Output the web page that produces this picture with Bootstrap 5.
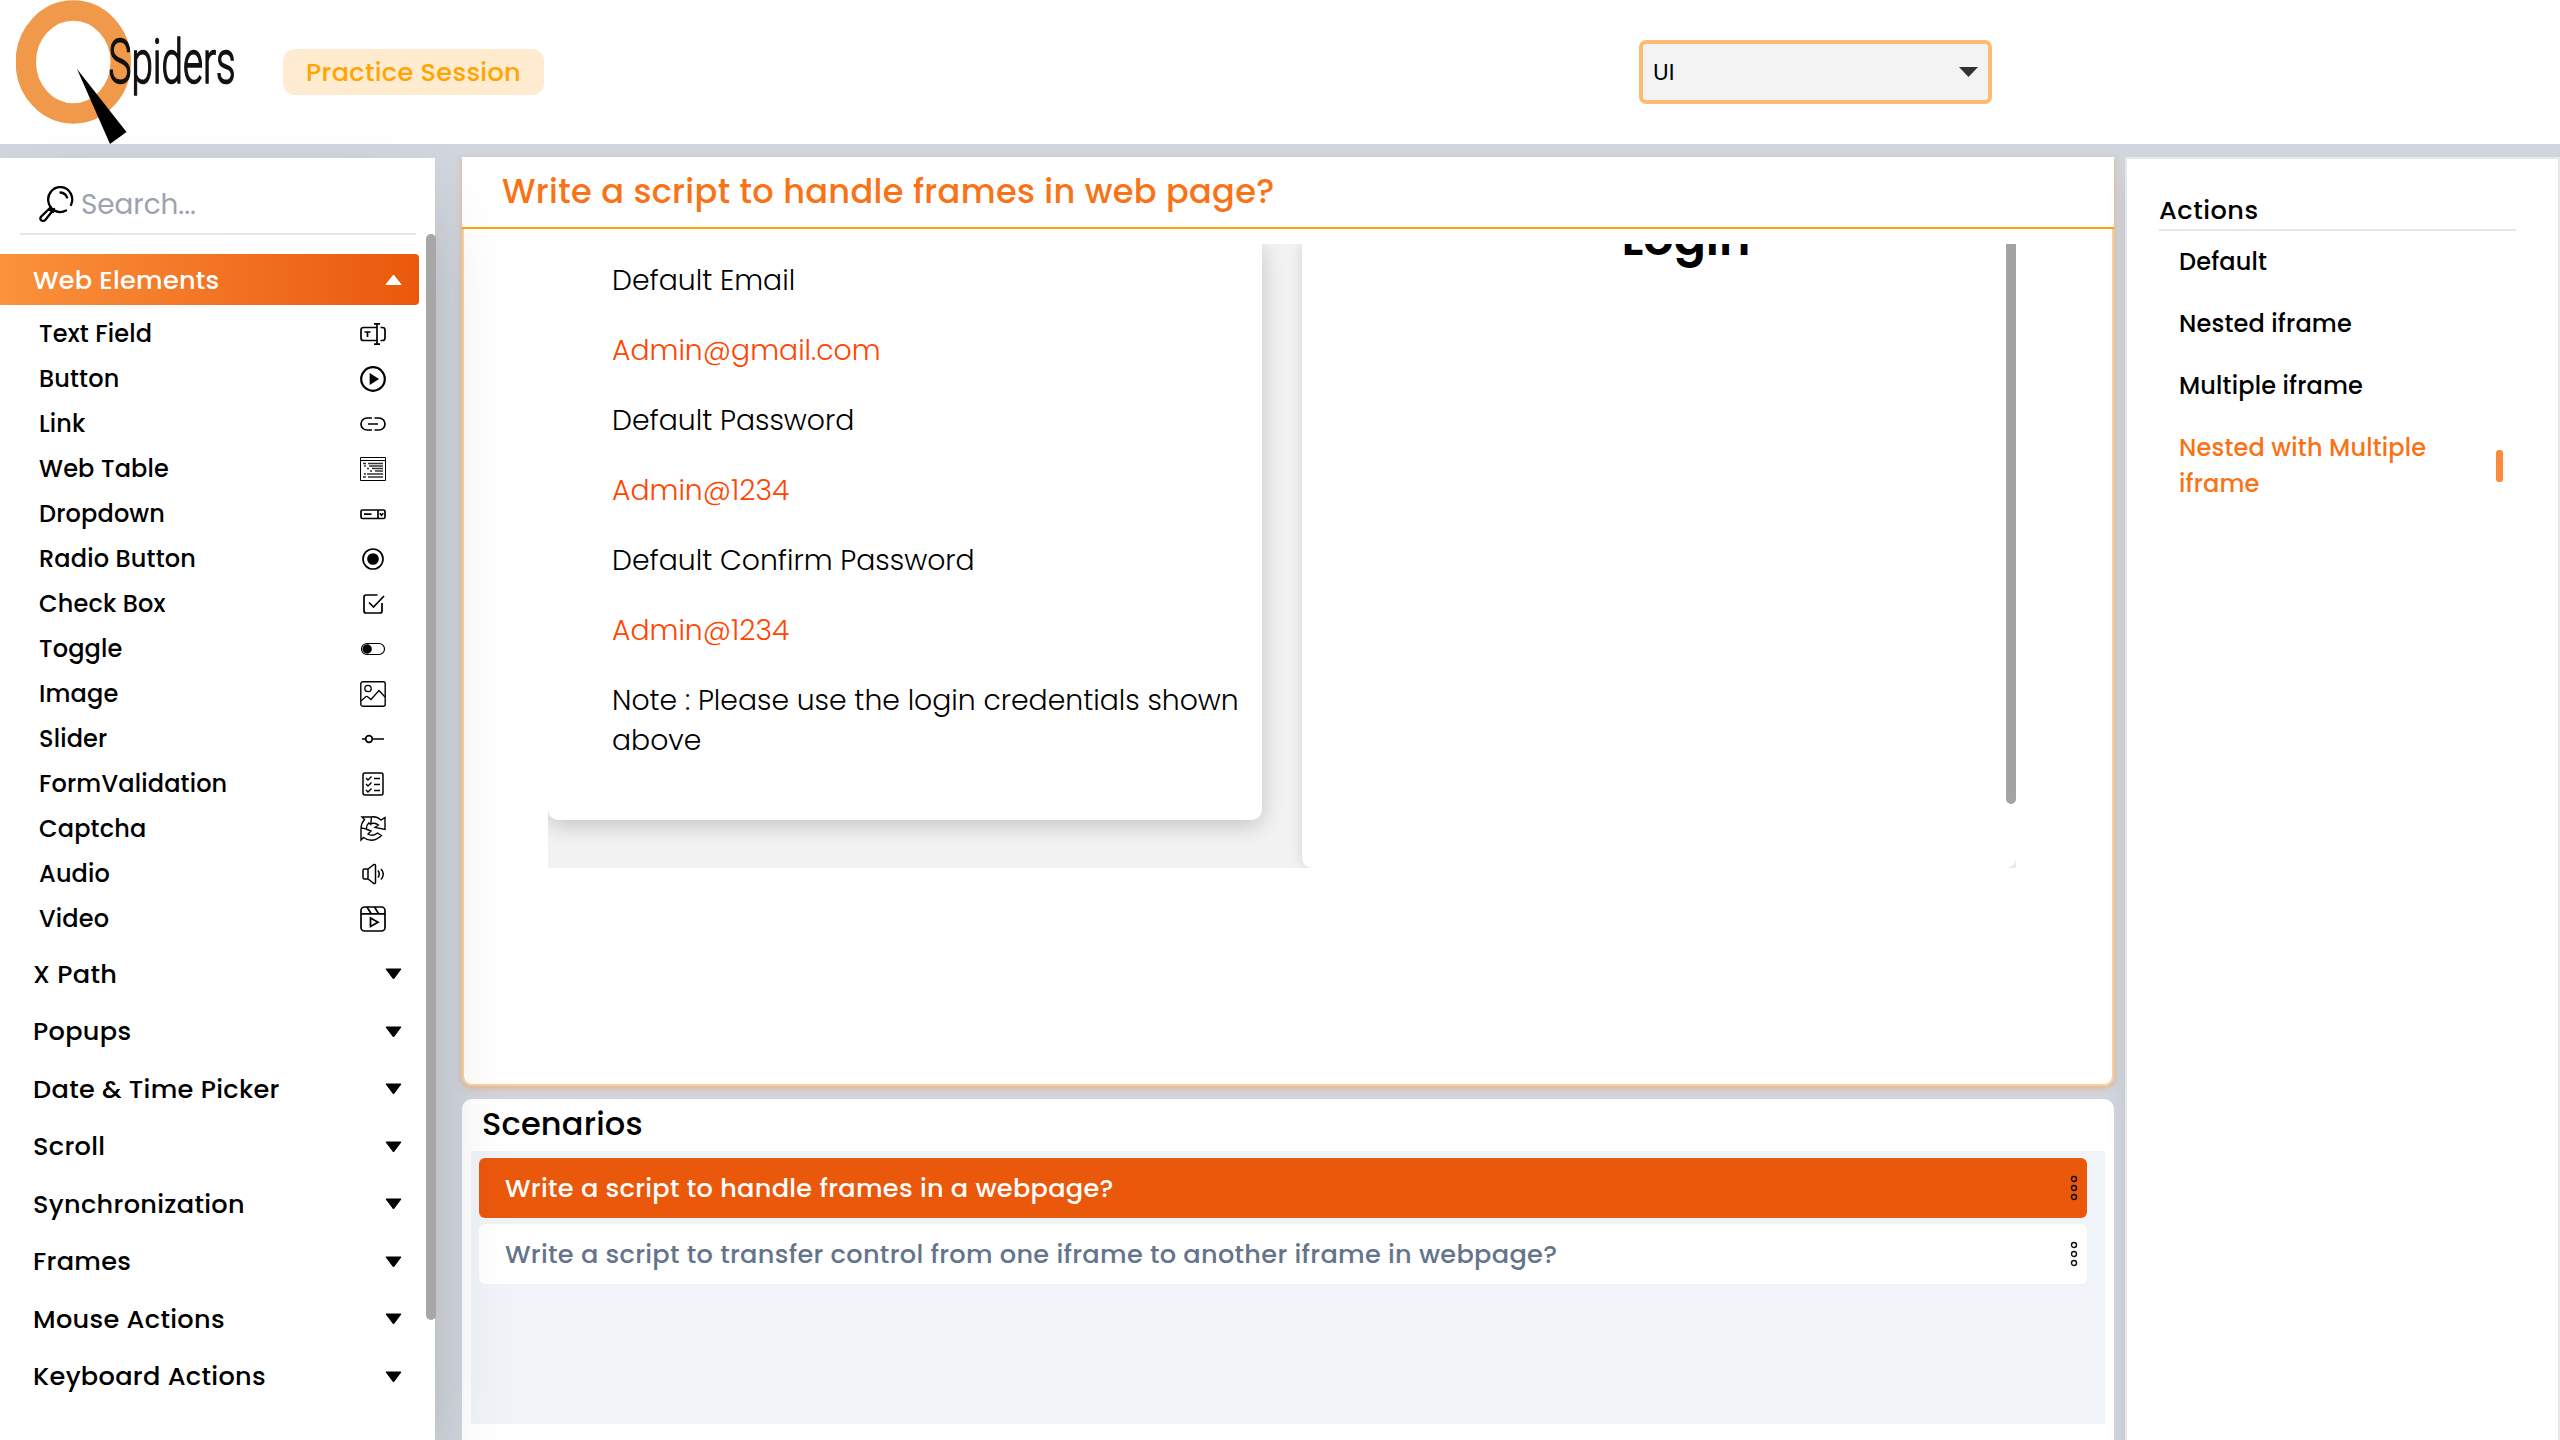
<!DOCTYPE html>
<html lang="en">
<head>
<meta charset="utf-8">
<title>QSpiders Practice Session</title>
<link rel="stylesheet" href="https://cdn.jsdelivr.net/npm/bootstrap@5.3.0/dist/css/bootstrap.min.css">
<style>
body{font-family:Poppins,Inter,"Open Sans",sans-serif;color:#000;background:#d1d5dd;height:1440px;overflow:hidden;font-weight:500}
.topbar{height:144px;padding-left:16px}
.session-tag{margin-left:45px;width:261px;height:46px;padding-top:1px;border-radius:12px;background:#ffebd0;color:#ffa500;font-size:25.6px;letter-spacing:.3px}
.type-select{margin-left:1095px;width:353px;height:64px;border:4px solid #fdba74;border-radius:7px;background:#f3f3f3;padding:0 10px 0 10px;font-size:23.2px;font-weight:400}
.workspace{height:1296px}
.side-panel{width:435px;margin-top:14px;box-shadow:0 40px 80px -19px rgba(0,0,0,.25);z-index:2}
.search-box{margin-left:20px;width:396px;height:77px;padding:17px 0 0 19px;border-bottom:2px solid #e5e7eb;color:#9ca3af;font-size:27.8px;font-weight:400;gap:7px}
.search-box span{padding-top:1px}
.group-open{margin-top:19px;width:419px;height:51px;padding:1px 17px 0 33px;border-radius:0 4px 4px 0;background:linear-gradient(90deg,#fb923c,#ea580c);color:#fff;font-size:25.6px;letter-spacing:.25px}
.topic-list{margin:6px 0 4px}
.topic-list li{height:45px;padding:0 49px 0 39px;font-size:24px;letter-spacing:.16px}
.topic-list svg{width:26px;height:26px;fill:none;stroke:#000;stroke-width:1.7}
.group-row{height:57.5px;width:419px;padding:.6px 17px 0 33px;font-size:25.6px;letter-spacing:.32px}
.side-thumb{right:-1px;top:76px;width:10px;height:1086px;border-radius:5px;background:#a7a7a7}
.main-col{width:1652px;margin:13px 0 0 27px}
.question-card{height:929px;border-radius:0 0 10px 10px;box-shadow:0 2px 6px rgba(251,146,60,.55)}
.question-title{height:72px;padding-left:40px;border-bottom:2px solid #ffa500;color:#f97316;font-size:33.6px;letter-spacing:.33px}
.question-body{height:857px;border:2px solid #fdd09b;border-top:0;border-radius:0 0 10px 10px;padding:15px 0 0 84px}
.frame-view{width:1468px;height:624px;background:#f2f2f2}
.cred-card{width:714px;height:576px;padding:16px 20px 0 64px;border-radius:0 0 10px 10px;box-shadow:0 5px 22px rgba(0,0,0,.2);font-size:28.27px;font-weight:300;line-height:40px}
.cred-card p{margin-bottom:30px}
.cred-value{color:#ff4500}
.login-card{margin-left:40px;width:714px;border-radius:0 0 10px 10px;box-shadow:0 0 14px rgba(0,0,0,.12)}
.login-title{margin:-28px 0 0 0;padding-left:64px;font-size:47.5px;line-height:45px;font-weight:600}
.frame-thumb{width:10px;height:560px;border-radius:0 0 5px 5px;background:#a3a3a3}
.scenario-card{margin-top:13px;height:341px;border-radius:10px 10px 0 0;padding:0 9px}
.scenario-head{height:52px;padding:0 0 3px 11px;font-size:32px;letter-spacing:.2px}
.scenario-list{height:273px;background:#f0f4f9;padding:7px 18px 0 8px;gap:6px}
.scenario-row{height:60px;border-radius:6px;padding:0 9px 0 26px;font-size:25.6px;color:#64748b;letter-spacing:.3px}
.scenario-row.current{background:#ea580c;color:#fff}
.action-panel{width:435px;margin:13px 0 0 11px;border:2px solid #e5e7eb;border-bottom:0;padding:32px 42px 0 32px;box-shadow:0 16px 24px -5px rgba(0,0,0,.12)}
.action-head{height:40px;border-bottom:2px solid #e5e7eb;font-size:25.6px;line-height:38px;letter-spacing:.5px}
.action-row{padding:13px 13px 13px 20px;font-size:24px;line-height:36px;letter-spacing:.17px}
.action-row.current{color:#f97316}
.action-mark{width:7px;height:32px;border-radius:3px;background:#fb8b3a}
</style>
<script src="https://cdn.jsdelivr.net/npm/bootstrap@5.3.0/dist/js/bootstrap.bundle.min.js"></script>
</head>
<body>
<header class="topbar bg-white d-flex align-items-center">
  <svg width="222" height="144" viewBox="16 0 222 144">
    <ellipse cx="73.3" cy="62" rx="47.5" ry="51.4" fill="none" stroke="#f0994b" stroke-width="20.5"/>
    <text x="108.500" y="83" font-family="Roboto" font-size="61" font-weight="300" textLength="127" lengthAdjust="spacingAndGlyphs" fill="#111" stroke="#111" stroke-width="1.600">Spiders</text>
    <path d="M77 69 126.500 132 110 144z"/>
  </svg>
  <div class="session-tag d-flex align-items-center justify-content-center">Practice Session</div>
  <div class="type-select d-flex align-items-center justify-content-between"><span>UI</span>
    <svg width="19" height="10"><path d="M0 0h19L9.500 10z" fill="#2e3436"/></svg></div>
</header>
<div class="workspace d-flex">
  <aside class="side-panel bg-white position-relative flex-shrink-0">
    <div class="search-box d-flex align-items-center">
      <svg width="35" height="36" viewBox="0 0 35 36" fill="none" stroke="#000" stroke-width="2.300" stroke-linecap="round"><path d="M27 24.500A12 12.500 0 1 1 32 19M21.500 6.500q5 .5 6.500 5M12 21 1.800 31q-1.500 3 2 4 1.500 0 2.500-1L15 23M11 24l3 2"/></svg>
      <span>Search...</span>
    </div>
    <div class="group-open d-flex align-items-center justify-content-between"><span>Web Elements</span><svg width="17" height="12"><path d="M1 10.500 8.500 1 16 10.500z" fill="#fff" stroke="#fff" stroke-linejoin="round"/></svg></div>
    <ul class="topic-list list-unstyled">
      <li class="d-flex align-items-center justify-content-between"><span>Text Field</span><svg viewBox="0 0 26 26"><path d="M17 6.500H3.500Q1 6.500 1 9v8q0 2.500 2.500 2.500H17M20.500 6.500h2Q25 6.500 25 9v8q0 2.500-2.500 2.500h-2M17 3v20M14 2.800h6M14 23.200h6M4.500 11h6M7.500 11v5"/></svg></li>
      <li class="d-flex align-items-center justify-content-between"><span>Button</span><svg viewBox="0 0 26 26"><circle cx="13" cy="13" r="11.800" stroke-width="2.200"/><path d="M10.500 8.500v9l7-4.500z" fill="#000"/></svg></li>
      <li class="d-flex align-items-center justify-content-between"><span>Link</span><svg viewBox="0 0 26 26"><path d="M12 7H7a6 6 0 0 0 0 12h5M14.500 7H19a6 6 0 0 1 0 12h-4.500M8 13h10"/></svg></li>
      <li class="d-flex align-items-center justify-content-between"><span>Web Table</span><svg viewBox="0 0 26 26"><path d="M.5 1.500h25v23H.500zM.5 4.500h25" stroke-width="1"/><path d="M3 7.500h3M8 7.500h15M9 10h14M4 10h2M12 12.500h11M7 12.500h2M15 15h8M10 15h2M4 18h2M7 18h16M3 21h3M8 21h15" stroke-width="1.500" stroke="#333"/></svg></li>
      <li class="d-flex align-items-center justify-content-between"><span>Dropdown</span><svg viewBox="0 0 26 26"><rect x="1" y="9" width="24" height="8.500" rx="1.500"/><path d="M18 9v8.500M4 13.200h7.500M19.800 12.200l1.700 2 1.700-2"/></svg></li>
      <li class="d-flex align-items-center justify-content-between"><span>Radio Button</span><svg viewBox="0 0 26 26"><circle cx="13" cy="13" r="10"/><circle cx="13" cy="13" r="5" fill="#000"/></svg></li>
      <li class="d-flex align-items-center justify-content-between"><span>Check Box</span><svg viewBox="0 0 26 26"><path d="M17.500 4H6Q4 4 4 6v14q0 2 2 2h14q2 0 2-2v-8M9 11.500l4.500 4.500L24 5"/></svg></li>
      <li class="d-flex align-items-center justify-content-between"><span>Toggle</span><svg viewBox="0 0 26 26"><rect x="1.500" y="7.500" width="23" height="11" rx="5.500" stroke-width="1.200"/><circle cx="7.200" cy="13" r="3.800" fill="#000"/></svg></li>
      <li class="d-flex align-items-center justify-content-between"><span>Image</span><svg viewBox="0 0 26 26"><rect x=".8" y=".8" width="24.400" height="24.400" rx="2" stroke-width="1.400"/><circle cx="8" cy="7.500" r="3.200" stroke-width="1.300"/><path d="M1 20l5-4.500q1-.5 2 .5l3 2.500 8-9 6 6.500" stroke-width="1.300"/></svg></li>
      <li class="d-flex align-items-center justify-content-between"><span>Slider</span><svg viewBox="0 0 26 26"><path d="M2 13h4M12.500 13H24"/><circle cx="9" cy="13" r="3.300"/></svg></li>
      <li class="d-flex align-items-center justify-content-between"><span>FormValidation</span><svg viewBox="0 0 26 26"><rect x="3" y="2" width="20" height="22" rx="2" stroke-width="1.500"/><path d="M6 7l2 2 3.500-3.500M6 13l2 2 3.500-3.500M6 19l2 2 3.500-3.500M14 7.500h6M14 13.500h6M14 19.500h6" stroke-width="1.400"/></svg></li>
      <li class="d-flex align-items-center justify-content-between"><span>Captcha</span><svg viewBox="0 0 26 26"><path d="M2 1h9.500l-.8 7.500-2-1.500Q6.500 9 6.300 13L1 12q.3-5 3.500-8.500zM12 .8q5-.5 9 3.200l4-2.500v12l-10-2 3.500-2.500q-3-2.500-7-1.500M1 12v12l2.500-2.500q9 6.500 18-2L17.500 17q-4.500 4-9.500 1l3-3-5-2" stroke-width="1.400"/></svg></li>
      <li class="d-flex align-items-center justify-content-between"><span>Audio</span><svg viewBox="0 0 26 26"><path d="M3 9.500q0-1.500 1.500-1.500H8l6-4.500q1.500-.5 1.500 1v17q0 1.500-1.500 1L8 18H4.500Q3 18 3 16.500zM8 8v10M18 9.500q2.500 3.500 0 7M21 8q4.500 5 0 10.500" stroke-width="1.500"/></svg></li>
      <li class="d-flex align-items-center justify-content-between"><span>Video</span><svg viewBox="0 0 26 26"><rect x="1" y="1" width="24" height="24" rx="3.500"/><path d="M1 7.800h24M7 1l4 6.500M14.500 1l4 6.500M10.500 12v8.500l7.500-4.200z"/></svg></li>
    </ul>
    <div class="group-row d-flex align-items-center justify-content-between"><span>X Path</span><svg width="17" height="12"><path d="M1 1h15L8.500 11z" stroke="#000" stroke-linejoin="round"/></svg></div>
    <div class="group-row d-flex align-items-center justify-content-between"><span>Popups</span><svg width="17" height="12"><path d="M1 1h15L8.500 11z" stroke="#000" stroke-linejoin="round"/></svg></div>
    <div class="group-row d-flex align-items-center justify-content-between"><span>Date &amp; Time Picker</span><svg width="17" height="12"><path d="M1 1h15L8.500 11z" stroke="#000" stroke-linejoin="round"/></svg></div>
    <div class="group-row d-flex align-items-center justify-content-between"><span>Scroll</span><svg width="17" height="12"><path d="M1 1h15L8.500 11z" stroke="#000" stroke-linejoin="round"/></svg></div>
    <div class="group-row d-flex align-items-center justify-content-between"><span>Synchronization</span><svg width="17" height="12"><path d="M1 1h15L8.500 11z" stroke="#000" stroke-linejoin="round"/></svg></div>
    <div class="group-row d-flex align-items-center justify-content-between"><span>Frames</span><svg width="17" height="12"><path d="M1 1h15L8.500 11z" stroke="#000" stroke-linejoin="round"/></svg></div>
    <div class="group-row d-flex align-items-center justify-content-between"><span>Mouse Actions</span><svg width="17" height="12"><path d="M1 1h15L8.500 11z" stroke="#000" stroke-linejoin="round"/></svg></div>
    <div class="group-row d-flex align-items-center justify-content-between"><span>Keyboard Actions</span><svg width="17" height="12"><path d="M1 1h15L8.500 11z" stroke="#000" stroke-linejoin="round"/></svg></div>
    <div class="side-thumb position-absolute"></div>
  </aside>
  <main class="main-col flex-shrink-0">
    <section class="question-card bg-white">
      <div class="question-title d-flex align-items-center">Write a script to handle frames in web page?</div>
      <div class="question-body">
        <div class="frame-view d-flex overflow-hidden">
          <div class="cred-card bg-white">
            <p>Default Email</p>
            <p class="cred-value">Admin@gmail.com</p>
            <p>Default Password</p>
            <p class="cred-value">Admin@1234</p>
            <p>Default Confirm Password</p>
            <p class="cred-value">Admin@1234</p>
            <p>Note : Please use the login credentials shown<br>above</p>
          </div>
          <div class="login-card bg-white d-flex">
            <div class="login-title flex-grow-1 text-center">Login</div>
            <div class="frame-thumb"></div>
          </div>
        </div>
      </div>
    </section>
    <section class="scenario-card bg-white">
      <div class="scenario-head d-flex align-items-center">Scenarios</div>
      <div class="scenario-list d-flex flex-column">
        <div class="scenario-row current d-flex align-items-center justify-content-between"><span>Write a script to handle frames in a webpage?</span><svg width="8" height="28" fill="none" stroke="#111" stroke-width="1.400"><circle cx="4" cy="5" r="2.500"/><circle cx="4" cy="14" r="2.500"/><circle cx="4" cy="23" r="2.500"/></svg></div>
        <div class="scenario-row bg-white d-flex align-items-center justify-content-between"><span>Write a script to transfer control from one iframe to another iframe in webpage?</span><svg width="8" height="28" fill="none" stroke="#111" stroke-width="1.400"><circle cx="4" cy="5" r="2.500"/><circle cx="4" cy="14" r="2.500"/><circle cx="4" cy="23" r="2.500"/></svg></div>
      </div>
    </section>
  </main>
  <aside class="action-panel bg-white flex-shrink-0">
    <div class="action-head">Actions</div>
    <div class="action-row">Default</div>
    <div class="action-row">Nested iframe</div>
    <div class="action-row">Multiple iframe</div>
    <div class="action-row current d-flex align-items-center justify-content-between"><div>Nested with Multiple<br>iframe</div><div class="action-mark"></div></div>
  </aside>
</div>
</body>
</html>
